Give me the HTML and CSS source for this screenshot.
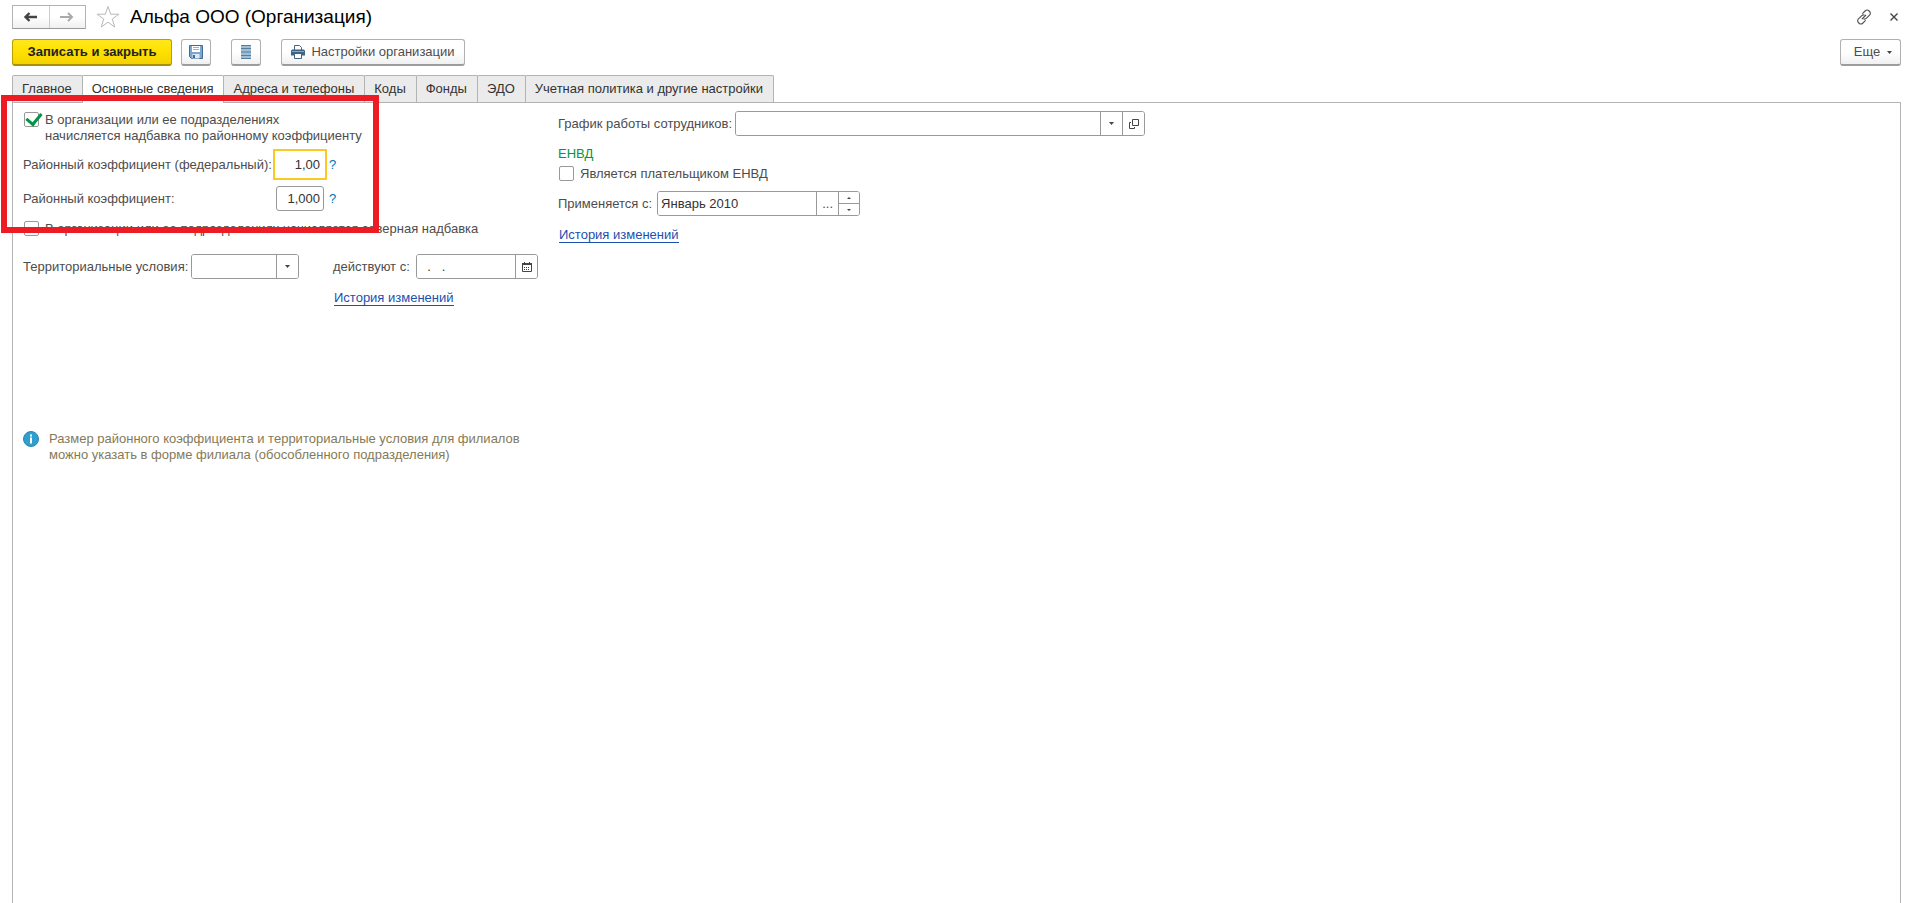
FILE: index.html
```html
<!DOCTYPE html>
<html lang="ru">
<head>
<meta charset="utf-8">
<title>Альфа ООО (Организация)</title>
<link rel="stylesheet" href="styles.css">
</head>
<body>
<header class="titlebar">
  <div class="nav">
    <button class="nav-btn" aria-label="Назад"><svg width="16" height="12" viewBox="0 0 16 12"><path d="M2 6h12M6.500 2L2.500 6l4 4" fill="none" stroke="#444" stroke-width="2.400"/></svg></button>
    <button class="nav-btn" aria-label="Вперед"><svg width="16" height="12" viewBox="0 0 16 12"><path d="M1 6h12M9 2l4 4-4 4" fill="none" stroke="#aaa" stroke-width="2"/></svg></button>
  </div>
  <button class="icon-btn star" aria-label="В избранное"><svg width="24" height="24" viewBox="0 0 24 24"><path d="M12 1.500l2.700 7.700h8.100l-6.500 4.900 2.400 7.900-6.700-4.800-6.700 4.800 2.400-7.900-6.500-4.900h8.100z" fill="#fff" stroke="#b4b8bd"/></svg></button>
  <h1 class="title">Альфа ООО (Организация)</h1>
  <button class="icon-btn link-btn" aria-label="Получить ссылку"><svg width="16" height="16" viewBox="0 0 18 18" fill="none" stroke="#555" stroke-width="1.300" stroke-linecap="round"><path d="M7.500 5l3-3a2.800 2.800 0 0 1 4 0l.8.8a2.800 2.800 0 0 1 0 4l-3.800 3.800a2.500 2.500 0 0 1-2.500.6M10.500 13l-3 3a2.800 2.800 0 0 1-4 0l-.8-.8a2.800 2.800 0 0 1 0-4l3.800-3.800a2.500 2.500 0 0 1 2.500-.6M7 11l4-4"/></svg></button>
  <button class="icon-btn" aria-label="Закрыть"><svg width="10" height="10" viewBox="0 0 10 10"><path d="M1.500 1.500l7 7M8.500 1.500l-7 7" stroke="#444" stroke-width="1.400"/></svg></button>
</header>

<div class="toolbar">
  <button class="btn primary">Записать и закрыть</button>
  <button class="btn square" aria-label="Записать"><svg width="14" height="14" viewBox="0 0 14 14"><path d="M.5.5h13v13h-11l-2-2z" fill="#7ba6d2" stroke="#416a92"/><path d="M3 1h8v6H3z" fill="#fff"/><path d="M4 2.500h6M4 4.500h6" stroke="#9ab0c4"/><path d="M3.500 9h7v4.500h-7z" fill="#dfe8f0"/><path d="M4 10h2v3H4z" fill="#416a92"/></svg></button>
  <button class="btn square spaced" aria-label="Список"><svg width="10" height="14" viewBox="0 0 10 14"><path d="M0 0h10v14H0z" fill="#9fbdd3"/><path d="M0 .5h10M0 3.500h10M0 7h10M0 10.500h10M0 13.500h10" stroke="#557f9f"/></svg></button>
  <button class="btn print spaced"><svg width="14" height="14" viewBox="0 0 14 14"><path d="M3.500 5V.5h5l2 2V5" fill="#fff" stroke="#3f6384"/><path d="M1 4.500h12l1 1v5H0v-5z" fill="#3f6384"/><path d="M1 6.500h12" stroke="#8ba8c0"/><path d="M3.500 8.500h7v5h-7z" fill="#fff" stroke="#3f6384"/></svg>Настройки организации</button>
  <button class="btn more">Еще<svg width="5" height="3" viewBox="0 0 5 3"><path d="M0 0h5L2.500 3z" fill="#444"/></svg></button>
</div>

<nav class="tabs" role="tablist">
  <button class="tab" role="tab">Главное</button>
  <button class="tab active" role="tab" aria-selected="true">Основные сведения</button>
  <button class="tab" role="tab">Адреса и телефоны</button>
  <button class="tab" role="tab">Коды</button>
  <button class="tab" role="tab">Фонды</button>
  <button class="tab" role="tab">ЭДО</button>
  <button class="tab" role="tab">Учетная политика и другие настройки</button>
</nav>

<main class="panel">
  <section class="col-left">
    <div class="check">
      <input type="checkbox" id="rk" checked>
      <label for="rk">В организации или ее подразделениях<br>начисляется надбавка по районному коэффициенту</label>
    </div>
    <div class="coef">
      <label for="fed">Районный коэффициент (федеральный):</label>
      <input class="num focused" id="fed" value="1,00">
      <a class="help" href="#">?</a>
      <label for="reg">Районный коэффициент:</label>
      <input class="num" id="reg" value="1,000">
      <a class="help" href="#">?</a>
    </div>
    <div class="check north">
      <input type="checkbox" id="north">
      <label for="north">В организации или ее подразделениях начисляется северная надбавка</label>
    </div>
    <div class="territory">
      <label for="terr">Территориальные условия:</label>
      <div class="field terr">
        <input id="terr">
        <button aria-label="Выбрать из списка"><svg width="5" height="3" viewBox="0 0 5 3"><path d="M0 0h5L2.500 3z" fill="#444"/></svg></button>
      </div>
      <label class="since" for="date">действуют с:</label>
      <div class="field date">
        <input id="date" value="  .   .">
        <button aria-label="Календарь"><svg width="10" height="10" viewBox="0 0 10 10"><path d="M.5 1.500h9v8h-9z" fill="#fff" stroke="#444"/><path d="M0 1h10v2H0zM2 0h1v2H2zM7 0h1v2H7z" fill="#444"/><path d="M2 5.500h6M2 7.500h6" stroke="#444" stroke-dasharray="1 1"/></svg></button>
      </div>
      <a class="history" href="#">История изменений</a>
    </div>
    <div class="info">
      <svg width="16" height="16" viewBox="0 0 16 16"><circle cx="8" cy="8" r="7.500" fill="#2f9fd0" stroke="#2888b4"/><path d="M7 3.500h2v2H7zM7 6.500h2v6H7z" fill="#fff"/></svg>
      <p>Размер районного коэффициента и территориальные условия для филиалов<br>можно указать в форме филиала (обособленного подразделения)</p>
    </div>
  </section>

  <section class="col-right">
    <div class="row">
      <label for="sched">График работы сотрудников:</label>
      <div class="field sched">
        <input id="sched">
        <button aria-label="Выбрать из списка"><svg width="5" height="3" viewBox="0 0 5 3"><path d="M0 0h5L2.500 3z" fill="#444"/></svg></button>
        <button aria-label="Открыть"><svg width="10" height="10" viewBox="0 0 10 10"><path d="M3.500.5h6v6h-6zM2 3.500H.5v6h5V8" fill="none" stroke="#444"/></svg></button>
      </div>
    </div>
    <h2 class="group">ЕНВД</h2>
    <div class="check">
      <input type="checkbox" id="envd">
      <label for="envd">Является плательщиком ЕНВД</label>
    </div>
    <div class="row applied">
      <label for="from">Применяется с:</label>
      <div class="field month">
        <input id="from" value="Январь 2010">
        <button aria-label="Выбрать">...</button>
        <div class="spin">
          <button aria-label="Больше"><svg width="4" height="2" viewBox="0 0 4 2"><path d="M0 2h4L2 0z" fill="#444"/></svg></button>
          <button aria-label="Меньше"><svg width="4" height="2" viewBox="0 0 4 2"><path d="M0 0h4L2 2z" fill="#444"/></svg></button>
        </div>
      </div>
    </div>
    <a class="history" href="#">История изменений</a>
  </section>
  <div class="highlight"></div>
</main>
</body>
</html>
```

FILE: styles.css
```css
* { box-sizing: border-box; }
body {
  margin: 0;
  min-height: 100vh;
  padding: 5px 19px 0 12px;
  display: flex;
  flex-direction: column;
  background: #fff;
  color: #4d4d4d;
  font: 13px/16px "Liberation Sans", Arial, sans-serif;
}
button, input { font: inherit; color: inherit; margin: 0; padding: 0; }
label { white-space: nowrap; }
svg { display: block; flex: none; }
h1, h2, p { margin: 0; font-weight: normal; }

.titlebar { display: flex; align-items: center; height: 24px; }
.nav {
  display: flex;
  width: 74px;
  height: 24px;
  border: 1px solid #b3b3b3;
  border-bottom-color: #999;
  background: linear-gradient(#fff 50%, #efefef);
}
.nav-btn {
  flex: 1;
  display: flex;
  align-items: center;
  justify-content: center;
  border: 0;
  background: none;
}
.nav-btn + .nav-btn { border-left: 1px solid #ccc; }
.icon-btn { border: 0; background: none; }
.star { margin-left: 10px; }
.title { flex: 1; margin-left: 10px; color: #000; font-size: 19px; line-height: 24px; }
.link-btn { margin-right: 17px; }
.titlebar .icon-btn:last-child { margin-right: 2px; }

.toolbar { display: flex; margin-top: 10px; height: 27px; }
.btn {
  display: flex;
  align-items: center;
  justify-content: center;
  height: 27px;
  border: 1px solid #b0b0b0;
  border-bottom: 2px solid #9c9c9c;
  border-radius: 3px;
  background: linear-gradient(#fff 50%, #f0f0f0);
}
.primary {
  width: 160px;
  border-color: #b8a000;
  border-bottom-color: #a89000;
  background: linear-gradient(#ffe81a, #ffe000 50%, #f2d200);
  color: #222;
  font-weight: bold;
}
.square { width: 30px; margin-left: 9px; }
.btn.spaced { margin-left: 20px; }
.print { width: 184px; gap: 6px; }
.more { width: 61px; gap: 7px; margin-left: auto; padding-left: 5px; }

.tabs { display: flex; margin-top: 9px; }
.tab {
  height: 27px;
  padding: 0 10px 0 9px;
  border: 1px solid #b3b3b3;
  border-bottom: 0;
  border-radius: 2px 2px 0 0;
  background: #ebebeb;
  color: #333;
}
.tab + .tab { margin-left: -1px; }
.tab.active { z-index: 1; height: 28px; margin-bottom: -1px; padding-bottom: 1px; background: #fff; }

.panel {
  position: relative;
  flex: 1;
  display: grid;
  grid-template-columns: 535px 1fr;
  align-items: start;
  padding: 8px 10px 0;
  border: 1px solid #b3b3b3;
  border-bottom: 0;
}

.check { display: flex; align-items: flex-start; gap: 6px; padding: 1px 0 0 1px; }
.check input {
  appearance: none;
  position: relative;
  flex: none;
  width: 15px;
  height: 15px;
  border: 1px solid #999;
  border-radius: 2px;
  background: #fff;
}
.check input:checked::after {
  content: "";
  position: absolute;
  left: 4px;
  top: -3px;
  width: 7px;
  height: 12px;
  border: solid #009646;
  border-width: 0 3px 3px 0;
  transform: rotate(40deg);
}

.coef {
  display: grid;
  grid-template-columns: 253px 48px auto;
  justify-content: start;
  align-items: center;
  row-gap: 9px;
  margin-top: 8px;
}
.num {
  height: 25px;
  padding: 0 3px;
  border: 1px solid #999;
  border-radius: 3px;
  color: #333;
  text-align: right;
}
.focused { border-color: transparent; border-radius: 0; outline: 2px solid #fbc926; outline-offset: 1px; }
.help { margin-left: 5px; color: #0072bc; text-decoration: none; }
.north { margin-top: 9px; }

.territory {
  display: grid;
  grid-template-columns: 168px 108px 117px 122px;
  align-items: center;
  row-gap: 12px;
  margin-top: 17px;
}
.since { padding-left: 34px; }
.territory .history { grid-column: 3 / 5; margin-left: 35px; }
.history {
  justify-self: start;
  border-bottom: 1px solid #1b50b0;
  color: #1b50b0;
  line-height: 14px;
  text-decoration: none;
}

.field {
  display: flex;
  height: 25px;
  border: 1px solid #999;
  border-radius: 3px;
  overflow: hidden;
}
.field input {
  flex: 1;
  min-width: 0;
  padding: 0 3px;
  border: 0;
  color: #333;
}
.field button {
  display: flex;
  align-items: center;
  justify-content: center;
  width: 22px;
  border: 0;
  border-left: 1px solid #999;
  background: #fff;
}
.spin { display: flex; flex-direction: column; border-left: 1px solid #999; }
.field .spin button { flex: 1; width: 20px; border-left: 0; }
.field .spin button + button { border-top: 1px solid #999; }

.info { display: flex; gap: 10px; margin-top: 125px; color: #857a58; }

.row { display: flex; align-items: center; }
.sched { width: 410px; margin-left: 3px; }
.month { width: 203px; margin-left: 5px; }
.group { margin: 10px 0 3px; color: #009646; font-size: 13px; }
.applied { margin: 9px 0 11px; }
.col-right .history { display: inline-block; margin-left: 1px; }

.highlight {
  position: absolute;
  left: -12px;
  top: -8px;
  width: 378px;
  height: 138px;
  border: 6px solid #ed1c24;
  pointer-events: none;
  z-index: 2;
}
```
